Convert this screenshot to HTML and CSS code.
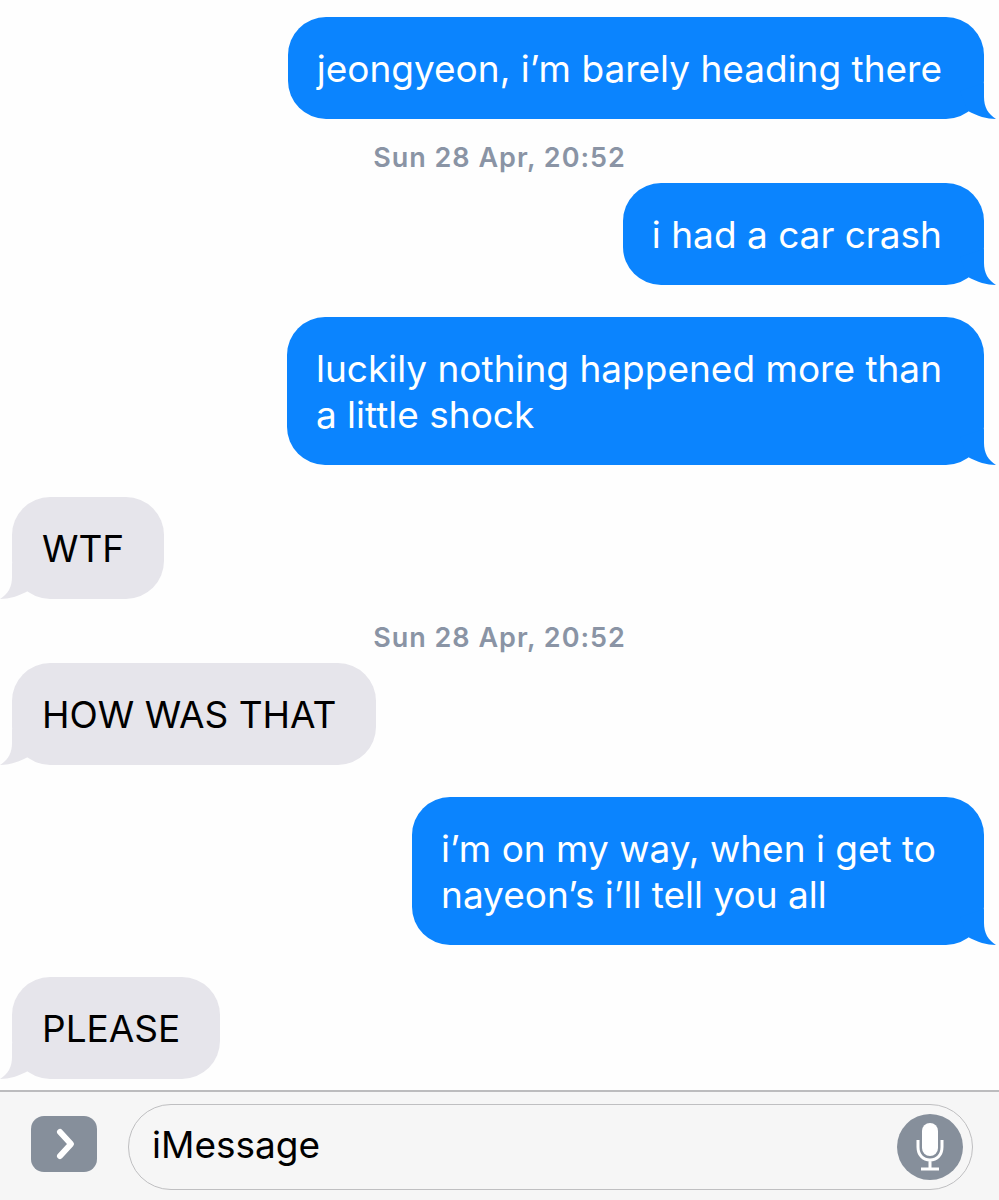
FILE: index.html
```html
<!doctype html>
<html lang="en">
	<head>
		<meta charset="UTF-8">
		<meta name="viewport" content="width=device-width, initial-scale=1">
		<title>Messages</title>
		<link rel="stylesheet" href="styles.css">
	</head>
	<body>
		<!-- tail shape shared by all bubbles -->
		<svg class="defs" aria-hidden="true">
			<symbol id="tail" viewBox="0 0 36 36">
				<path d="M24 0V14C24 24 28 31 36 36C27 36 17 33 8 28L0 8Z"/>
			</symbol>
		</svg>
		<main class="chat">
			<p class="bubble sent">jeongyeon, i’m barely heading there<svg class="tail"><use href="#tail"/></svg></p>
			<time class="date" datetime="2019-04-28T20:52">Sun 28 Apr, 20:52</time>
			<p class="bubble sent">i had a car crash<svg class="tail"><use href="#tail"/></svg></p>
			<p class="bubble sent gap">luckily nothing happened more than<br>a little shock<svg class="tail"><use href="#tail"/></svg></p>
			<p class="bubble received gap">WTF<svg class="tail"><use href="#tail"/></svg></p>
			<time class="date" datetime="2019-04-28T20:52">Sun 28 Apr, 20:52</time>
			<p class="bubble received">HOW WAS THAT<svg class="tail"><use href="#tail"/></svg></p>
			<p class="bubble sent gap roomy">i’m on my way, when i get to<br>nayeon’s i’ll tell you all<svg class="tail"><use href="#tail"/></svg></p>
			<p class="bubble received gap">PLEASE<svg class="tail"><use href="#tail"/></svg></p>
		</main>
		<form class="composer">
			<button class="more" type="button" aria-label="More">
				<svg width="66" height="56" viewBox="0 0 66 56"><path d="M29 16L40 28L29 40"/></svg>
			</button>
			<div class="field">
				<input class="input" type="text" placeholder="iMessage" aria-label="iMessage">
				<button class="mic" type="button" aria-label="Record audio">
					<svg width="66" height="66" viewBox="0 0 66 66">
						<rect class="mic-body" x="25" y="9" width="16" height="33" rx="8"/>
						<path class="mic-stand" d="M21 26V33C21 41 26 46 33 46S45 41 45 33V26M33 46V55M24 55H42"/>
					</svg>
				</button>
			</div>
		</form>
	</body>
</html>
```
FILE: styles.css
```css
*{box-sizing:border-box}
body{
	margin:0;
	min-height:100vh;
	display:flex;
	flex-direction:column;
	background-color:#fefefe;
	font-family:Inter,"Liberation Sans",sans-serif;
	color:#000
}
.defs{position:absolute;width:0;height:0}
.chat{
	flex:1;
	display:flex;
	flex-direction:column;
	padding:17px 0 11px
}
.bubble{
	position:relative;
	margin:0;
	padding:29px 40px 27px 30px;
	border-radius:38px;
	font-size:37px;
	line-height:46px
}
.gap{margin-top:32px}
.sent{
	align-self:flex-end;
	margin-right:15px;
	padding-left:29px;
	padding-right:42px;
	background-color:#0b84fe;
	color:#fff
}
.received{
	align-self:flex-start;
	margin-left:12px;
	background-color:#e6e5eb
}
.roomy{padding-right:48px}
.tail{
	position:absolute;
	right:-12px;
	bottom:0;
	width:36px;
	height:36px;
	fill:#0b84fe
}
.received .tail{
	right:auto;
	left:-12px;
	fill:#e6e5eb;
	transform:scaleX(-1)
}
.date{
	align-self:center;
	height:64px;
	line-height:78px;
	font-size:27px;
	font-weight:600;
	letter-spacing:1px;
	color:#8a94a5
}
.composer{
	display:flex;
	align-items:center;
	gap:31px;
	padding:12px 26px 10px 31px;
	border-top:2px solid #bcbcbe;
	background-color:#f6f6f6
}
button{
	flex:none;
	padding:0;
	border:0;
	background-color:#868f9b
}
button svg{
	display:block;
	fill:none;
	stroke:#fff;
	stroke-linecap:round;
	stroke-linejoin:round
}
.more{
	margin-bottom:6px;
	border-radius:13px
}
.more svg{stroke-width:6px}
.field{
	flex:1;
	min-width:0;
	height:86px;
	display:flex;
	align-items:center;
	padding:0 9px 0 23px;
	border:1px solid #bfbfc1;
	border-radius:43px
}
.input{
	flex:1;
	min-width:0;
	padding:0 0 4px;
	border:0;
	outline:0;
	background:none;
	font-family:inherit;
	font-size:37px;
	line-height:46px
}
.input::placeholder{color:#000;opacity:1}
.mic{border-radius:50%}
.mic .mic-body{fill:#fff;stroke:none}
.mic .mic-stand{stroke-width:3px;stroke-linecap:butt}
```
